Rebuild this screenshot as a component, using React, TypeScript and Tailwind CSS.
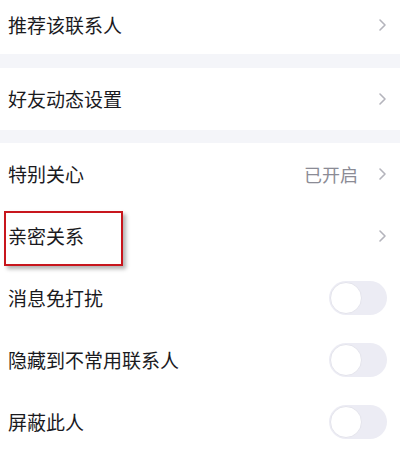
const Chevron = () => (
  <svg width="9" height="14" viewBox="0 0 9 14" fill="none" className="shrink-0">
    <path d="M2 2l5 5-5 5" stroke="#b4b4bc" strokeWidth="1.6" strokeLinecap="round" strokeLinejoin="round" />
  </svg>
);

const Toggle = () => (
  <div className="w-[58px] h-[34px] rounded-full bg-[#ececf4] flex items-center px-[1px]">
    <div className="w-[32px] h-[32px] rounded-full bg-white border border-[#e4e4ec]" />
  </div>
);

type RowProps = {
  label: string;
  value?: string;
  toggle?: boolean;
  h?: string;
};

const Row = ({ label, value, toggle, h = "h-[62px]" }: RowProps) => (
  <div className={`${h} flex items-center justify-between pl-[8px] pr-[13px] bg-white`}>
    <span className="text-[19px] text-[#1a1a1e]">{label}</span>
    <div className="flex items-center gap-[20px]">
      {value && <span className="text-[18px] text-[#8b8b95]">{value}</span>}
      {toggle ? <Toggle /> : <Chevron />}
    </div>
  </div>
);

export default function App() {
  return (
    <div
      className="relative w-[400px] h-[451px] bg-white overflow-hidden"
      style={{ fontFamily: '"Noto Sans CJK SC", "Noto Sans", sans-serif' }}
    >
      <Row label="推荐该联系人" h="h-[54px] pb-[4px]" />
      <div className="h-[14px] bg-[#f4f5f9]" />
      <Row label="好友动态设置" />
      <div className="h-[13px] bg-[#f4f5f9]" />
      <Row label="特别关心" value="已开启" />
      <Row label="亲密关系" />
      <Row label="消息免打扰" toggle />
      <Row label="隐藏到不常用联系人" toggle />
      <Row label="屏蔽此人" toggle />

      <div className="absolute left-[4px] top-[211px] w-[119px] h-[55px] border-2 border-[#c8161d] shadow-[3px_3px_4px_rgba(0,0,0,0.3)]" />
    </div>
  );
}
